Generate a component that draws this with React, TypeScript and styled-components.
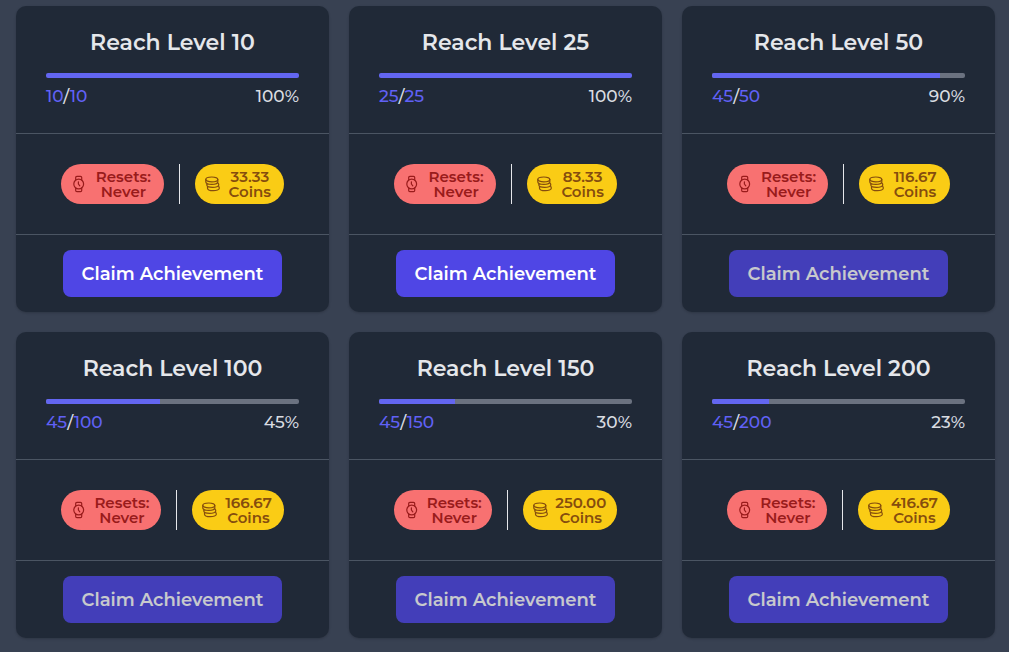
import React from "react";
import styled, { createGlobalStyle } from "styled-components";

const GlobalStyle = createGlobalStyle`
  *, *::before, *::after { box-sizing: border-box; }
  body {
    margin: 0;
    background: #384152;
    color: #e5e7eb;
    font-family: Montserrat, Inter, "Liberation Sans", sans-serif;
  }
`;

const Grid = styled.main`
  display: grid;
  grid-template-columns: repeat(3, minmax(0, 1fr));
  gap: 20px;
  padding: 6px 14px 14px 16px;
`;

const Card = styled.article`
  display: flex;
  flex-direction: column;
  background: #202937;
  border-radius: 10px;
  box-shadow: 0 1px 3px rgba(0, 0, 0, 0.1), 0 1px 2px rgba(0, 0, 0, 0.08);
`;

const Summary = styled.header`
  display: flex;
  flex-direction: column;
  padding: 25px 30px 23px;
`;

const Title = styled.h2`
  margin: 0 0 19px;
  font-size: 22px;
  line-height: 23px;
  font-weight: 600;
  text-align: center;
`;

const Track = styled.div`
  height: 5px;
  margin-bottom: 5px;
  overflow: hidden;
  border-radius: 2px;
  background: #6b7280;
`;

const Fill = styled.div`
  height: 100%;
  background: #6366f1;
`;

const Counts = styled.div`
  display: flex;
  justify-content: space-between;
  color: #d9dce1;
  font-size: 17px;
  line-height: 27px;
  font-weight: 500;
`;

const Accent = styled.span`
  color: #6061f6;
`;

const Details = styled.div`
  display: flex;
  align-items: stretch;
  justify-content: space-between;
  padding: 30px 45px;
  border-top: 1px solid #4b5563;
`;

const Divider = styled.div`
  flex: none;
  width: 1px;
  margin: 0 15px;
  background: #e5e7eb;
`;

const Pill = styled.div<{ $tone: "red" | "yellow" }>`
  display: flex;
  flex: 0 1 auto;
  align-items: center;
  gap: 6px;
  padding: 5px 10px;
  border-radius: 20px;
  background: ${(p) => (p.$tone === "red" ? "#f87171" : "#facc15")};
  color: ${(p) => (p.$tone === "red" ? "#991b1b" : "#854d0e")};
  font-size: 15px;
  line-height: 15px;
  font-weight: 600;
  text-align: center;

  svg { flex: none; }
`;

const PillText = styled.span`
  flex: 1 1 auto;
`;

const Actions = styled.footer`
  display: flex;
  justify-content: center;
  padding: 15px;
  border-top: 1px solid #4b5563;
`;

const ClaimButton = styled.button`
  padding: 11px 19px 9px;
  border: 0;
  border-radius: 8px;
  background: #4f46e5;
  color: #fff;
  font: inherit;
  font-size: 18px;
  line-height: 27px;
  font-weight: 600;
  cursor: pointer;

  &:disabled {
    opacity: 0.75;
    cursor: default;
  }
`;

const WatchIcon = () => (
  <svg width="16" height="18" viewBox="0 0 16 18" fill="none" stroke="currentColor" strokeWidth="1.2" strokeLinecap="round" strokeLinejoin="round" aria-hidden="true">
    <circle cx="7.7" cy="9" r="4.9" />
    <path d="M4.7 4.8V2.6Q4.7 1.4 5.9 1.4H9.5Q10.7 1.4 10.7 2.6V4.8M4.7 13.2V15.4Q4.7 16.6 5.9 16.6H9.5Q10.7 16.6 10.7 15.4V13.2M7.4 6.8V9L8.8 10.8" />
  </svg>
);

const CoinsIcon = () => (
  <svg width="15" height="16" viewBox="0 0 15 16" fill="none" stroke="currentColor" strokeWidth="1.2" strokeLinecap="round" strokeLinejoin="round" aria-hidden="true">
    <ellipse cx="6.8" cy="3.4" rx="6" ry="2.4" />
    <path d="M0.8 3.4V6C0.8 7.4 3.5 8.4 6.8 8.4S12.8 7.4 12.8 6V3.4M1.8 7.6V9.1C1.8 10.4 4.5 11.4 7.7 11.4S13.8 10.4 13.8 9.1C13.8 8.3 13.5 7.5 12.7 6.8M2.5 10.7V12.2C2.5 13.6 5.2 14.7 8.4 14.7S14.3 13.6 14.3 12.2C14.3 11.5 14.2 10.9 13.7 10.3" />
  </svg>
);

interface Achievement {
  goal: number;
  current: number;
  coins: string;
}

const achievements: Achievement[] = [
  { goal: 10, current: 10, coins: "33.33" },
  { goal: 25, current: 25, coins: "83.33" },
  { goal: 50, current: 45, coins: "116.67" },
  { goal: 100, current: 45, coins: "166.67" },
  { goal: 150, current: 45, coins: "250.00" },
  { goal: 200, current: 45, coins: "416.67" },
];

const AchievementCard = ({ goal, current, coins }: Achievement) => {
  const percent = (current / goal) * 100;
  return (
    <Card>
      <Summary>
        <Title>Reach Level {goal}</Title>
        <Track role="progressbar" aria-label={`Level ${goal} progress`} aria-valuenow={current} aria-valuemax={goal}>
          <Fill style={{ width: `${percent}%` }} />
        </Track>
        <Counts>
          <span>
            <Accent>{current}</Accent>/<Accent>{goal}</Accent>
          </span>
          <span>{Math.round(percent)}%</span>
        </Counts>
      </Summary>
      <Details>
        <Pill $tone="red">
          <WatchIcon />
          <PillText>Resets: Never</PillText>
        </Pill>
        <Divider />
        <Pill $tone="yellow">
          <CoinsIcon />
          <PillText>{coins} Coins</PillText>
        </Pill>
      </Details>
      <Actions>
        <ClaimButton type="button" disabled={current < goal}>Claim Achievement</ClaimButton>
      </Actions>
    </Card>
  );
};

export default function App() {
  return (
    <>
      <GlobalStyle />
      <Grid>
        {achievements.map((a) => (
          <AchievementCard key={a.goal} {...a} />
        ))}
      </Grid>
    </>
  );
}
